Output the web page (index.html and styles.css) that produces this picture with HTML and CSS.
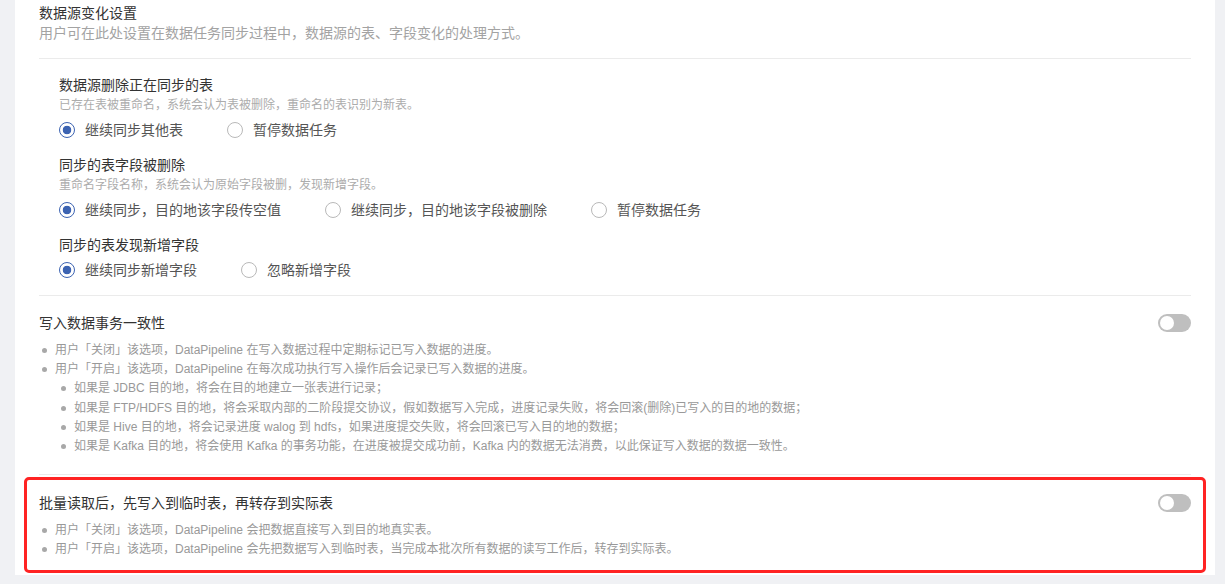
FILE: index.html
```html
<!DOCTYPE html>
<html lang="zh-CN">
<head>
  <meta charset="utf-8">
  <meta name="viewport" content="width=device-width, initial-scale=1">
  <title>数据源变化设置</title>
  <link rel="stylesheet" href="styles.css">
</head>
<body>
  <div class="panel">
    <div class="block block--head">
      <div class="title">数据源变化设置</div>
      <div class="subtitle">用户可在此处设置在数据任务同步过程中，数据源的表、字段变化的处理方式。</div>
    </div>

    <div class="block block--options">
      <div class="option">
        <div class="option-title">数据源删除正在同步的表</div>
        <div class="option-desc">已存在表被重命名，系统会认为表被删除，重命名的表识别为新表。</div>
        <div class="radio-group">
          <label class="radio radio--checked"><span class="radio-dot"></span>继续同步其他表</label>
          <label class="radio"><span class="radio-dot"></span>暂停数据任务</label>
        </div>
      </div>
      <div class="option">
        <div class="option-title">同步的表字段被删除</div>
        <div class="option-desc">重命名字段名称，系统会认为原始字段被删，发现新增字段。</div>
        <div class="radio-group">
          <label class="radio radio--checked"><span class="radio-dot"></span>继续同步，目的地该字段传空值</label>
          <label class="radio"><span class="radio-dot"></span>继续同步，目的地该字段被删除</label>
          <label class="radio"><span class="radio-dot"></span>暂停数据任务</label>
        </div>
      </div>
      <div class="option">
        <div class="option-title">同步的表发现新增字段</div>
        <div class="radio-group">
          <label class="radio radio--checked"><span class="radio-dot"></span>继续同步新增字段</label>
          <label class="radio"><span class="radio-dot"></span>忽略新增字段</label>
        </div>
      </div>
    </div>

    <div class="block block--switch">
      <div class="switch-head">
        <span class="title">写入数据事务一致性</span>
        <span class="switch"><span class="switch-knob"></span></span>
      </div>
      <ul class="notes">
        <li>用户「关闭」该选项，DataPipeline 在写入数据过程中定期标记已写入数据的进度。</li>
        <li>用户「开启」该选项，DataPipeline 在每次成功执行写入操作后会记录已写入数据的进度。
          <ul class="notes notes--sub">
            <li>如果是 JDBC 目的地，将会在目的地建立一张表进行记录；</li>
            <li>如果是 FTP/HDFS 目的地，将会采取内部的二阶段提交协议，假如数据写入完成，进度记录失败，将会回滚(删除)已写入的目的地的数据；</li>
            <li>如果是 Hive 目的地，将会记录进度 walog 到 hdfs，如果进度提交失败，将会回滚已写入目的地的数据；</li>
            <li>如果是 Kafka 目的地，将会使用 Kafka 的事务功能，在进度被提交成功前，Kafka 内的数据无法消费，以此保证写入数据的数据一致性。</li>
          </ul>
        </li>
      </ul>
    </div>

    <div class="block block--switch block--marked">
      <div class="switch-head">
        <span class="title">批量读取后，先写入到临时表，再转存到实际表</span>
        <span class="switch"><span class="switch-knob"></span></span>
      </div>
      <ul class="notes">
        <li>用户「关闭」该选项，DataPipeline 会把数据直接写入到目的地真实表。</li>
        <li>用户「开启」该选项，DataPipeline 会先把数据写入到临时表，当完成本批次所有数据的读写工作后，转存到实际表。</li>
      </ul>
    </div>
  </div>
</body>
</html>
```

FILE: styles.css
```css
*, *::before, *::after {
  box-sizing: border-box;
}
body {
  margin: 0;
  background: #f0f1f4;
  font-family: "Liberation Sans", "Noto Sans CJK SC", sans-serif;
  color: #333;
}

.panel {
  margin: 0 10px 0 15px;
  padding: 0 24px 2.6px;
  background: #fff;
}

.block {
  border-bottom: 1px solid #ebebeb;
}
.title {
  font-size: 14px;
  line-height: 20px;
  color: #333;
}
.subtitle {
  font-size: 14px;
  line-height: 20px;
  color: #a3a3a3;
}

/* head */
.block--head {
  padding: 3px 0 15px;
}

/* options with radios */
.block--options {
  padding: 16px 0 14px 20px;
}
.option + .option {
  margin-top: 14px;
}
.option-title {
  font-size: 14px;
  line-height: 20px;
  color: #333;
}
.option-desc {
  font-size: 12px;
  line-height: 20px;
  color: #acacac;
}
.radio-group {
  display: flex;
  gap: 44px;
  margin-top: 4px;
}
.radio {
  display: flex;
  align-items: center;
  font-size: 14px;
  line-height: 22px;
  color: #555;
}
.radio-dot {
  width: 16px;
  height: 16px;
  margin-right: 10px;
  border: 1px solid #b9b9b9;
  border-radius: 50%;
  background: #fff;
}
.radio--checked .radio-dot {
  border-color: #3c63b2;
  background: radial-gradient(circle, #3c63b2 0, #3c63b2 4px, #fff 4.6px);
}

/* switch sections */
.block--switch {
  padding: 17px 0 18px;
}
.switch-head {
  display: flex;
  justify-content: space-between;
  align-items: center;
}
.switch {
  display: flex;
  align-items: center;
  width: 33px;
  height: 18px;
  padding: 0 2px;
  border-radius: 9px;
  background: #bfbfbf;
}
.switch-knob {
  width: 14px;
  height: 14px;
  border-radius: 50%;
  background: #fff;
}

.notes {
  list-style: none;
  margin: 8px 0 0;
  padding: 0;
  font-size: 12px;
  line-height: 19.2px;
  color: #999;
}
.notes li {
  position: relative;
  padding-left: 16px;
}
.notes li::before {
  content: "";
  position: absolute;
  left: 3px;
  top: 7px;
  width: 5px;
  height: 5px;
  border-radius: 50%;
  background: #a8a8a8;
}
.notes--sub {
  margin: 0;
  padding-left: 3px;
}

/* highlighted section */
.block--marked {
  margin: 2px -15px 0;
  padding: 13px 12px 10px;
  border: 3px solid #ff2323;
  border-radius: 5px;
}
```
